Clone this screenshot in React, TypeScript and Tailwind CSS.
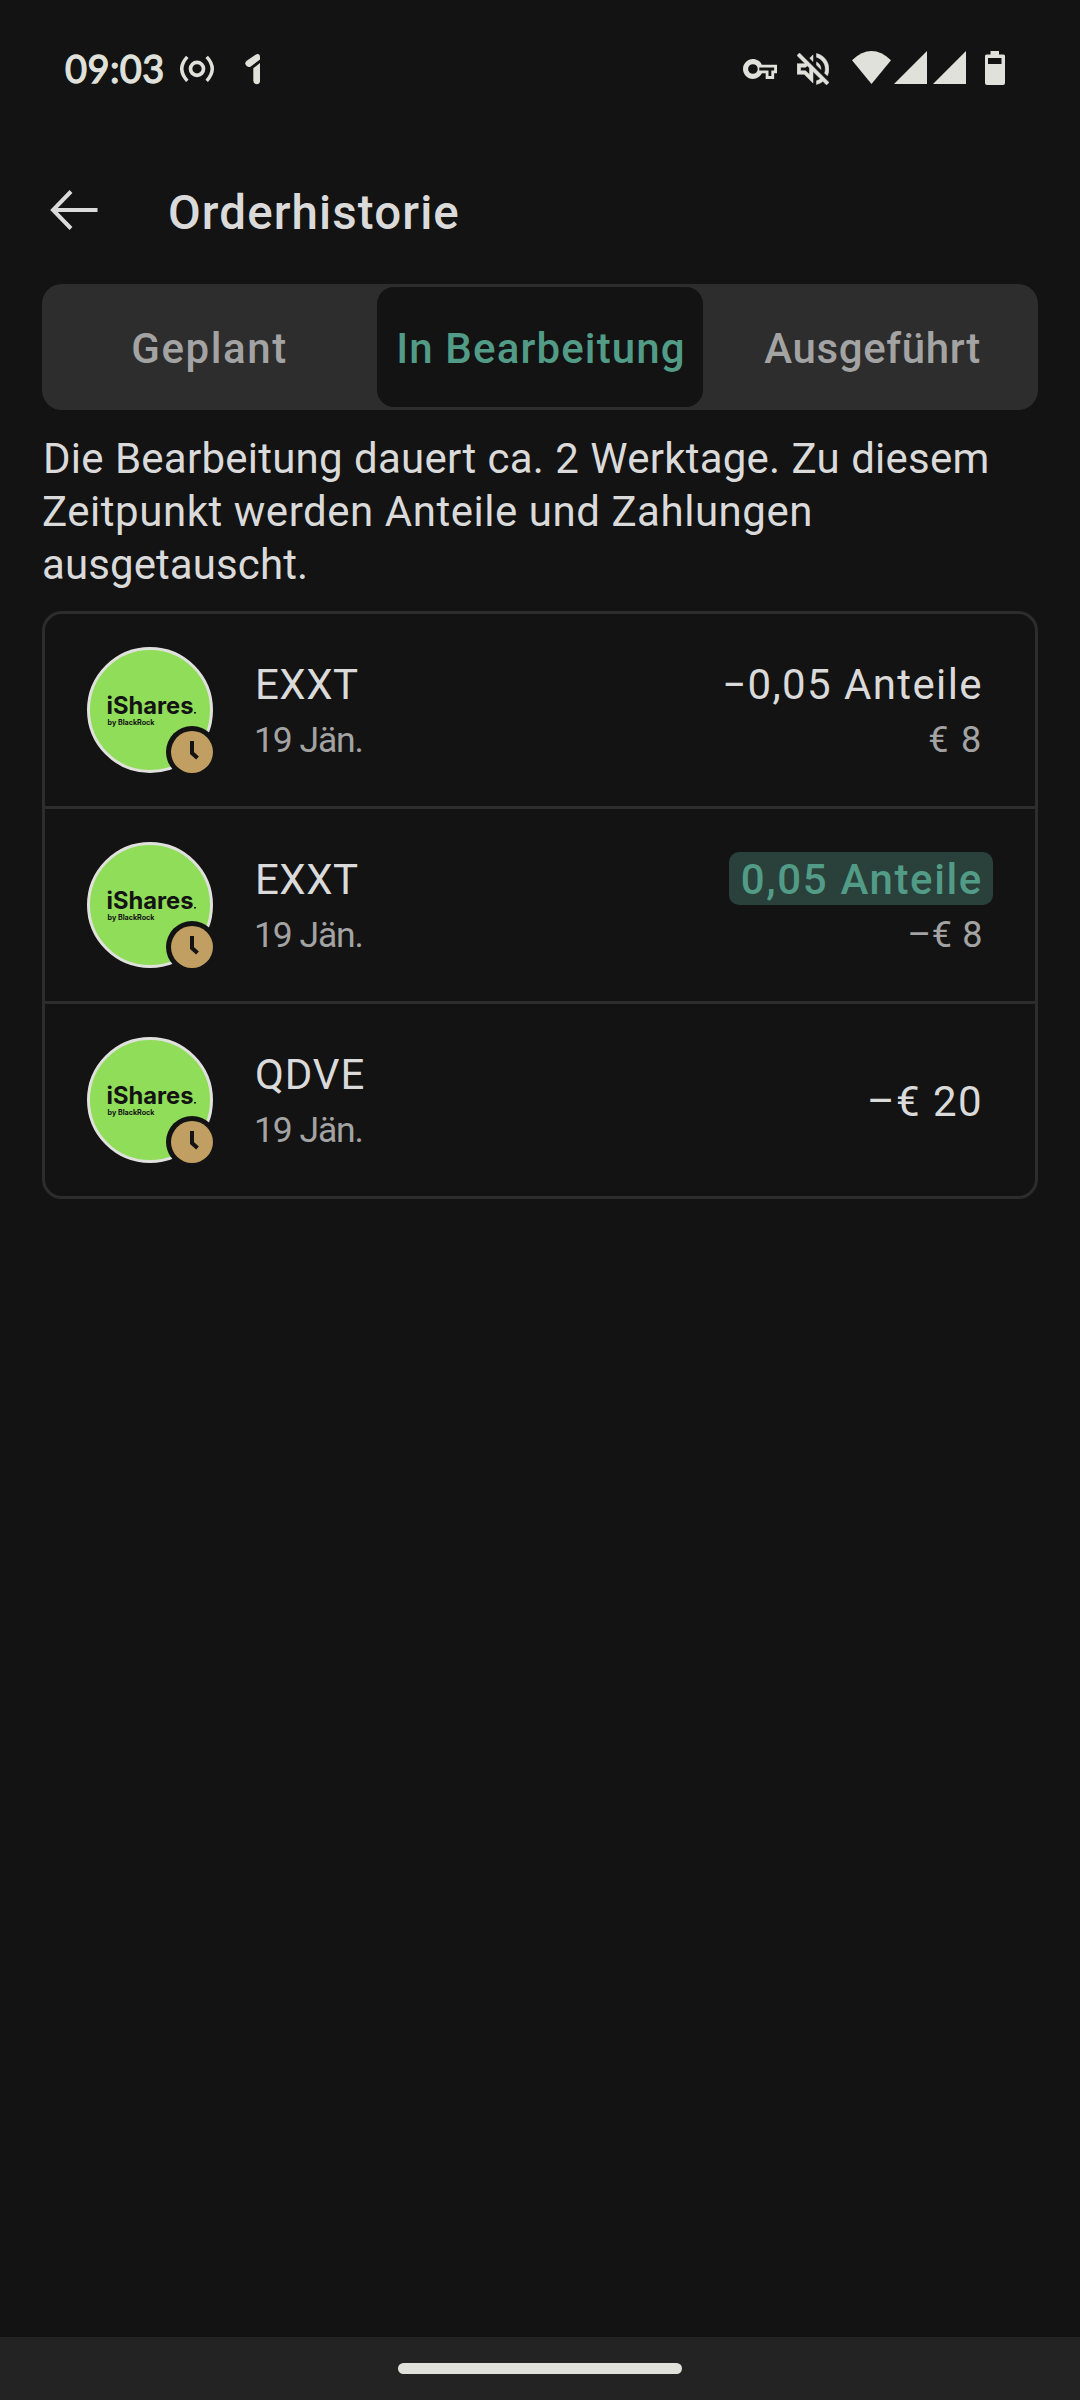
import type { ReactNode } from "react";

type Order = {
  name: string;
  nameClass: string;
  value: string;
  valueClass: string;
  positive?: boolean;
  detail?: string;
  detailClass?: string;
};

const orders: Order[] = [
  {
    name: "EXXT",
    nameClass: "tracking-[0.5px]",
    value: "−0,05 Anteile",
    valueClass: "tracking-[1.4px]",
    detail: "€ 8",
    detailClass: "tracking-[1.8px]",
  },
  {
    name: "EXXT",
    nameClass: "tracking-[0.5px]",
    value: "0,05 Anteile",
    valueClass: "tracking-[1.62px]",
    positive: true,
    detail: "–€ 8",
    detailClass: "tracking-[0.6px]",
  },
  {
    name: "QDVE",
    nameClass: "tracking-[0.9px]",
    value: "–€ 20",
    valueClass: "tracking-[1.45px]",
  },
];

function StatusBar() {
  return (
    <header className="flex h-[136px] items-start text-[#dfe1da]">
      <div className="ml-[65px] mt-[46px] w-[115px] whitespace-nowrap font-['Lato',sans-serif] text-[38px] leading-[44px] tracking-[0.4px] [-webkit-text-stroke:1.3px_#dfe1da]">
        09:03
      </div>
      <svg className="mt-[54px] h-[30px] w-[35px]" viewBox="0 0 35 30" fill="none" stroke="currentColor">
        <circle cx="17" cy="14.8" r="6.5" strokeWidth="3.7" />
        <path d="M7.3 2.8Q-3.8 14.8 7.3 26.8M26.7 2.8Q37.8 14.8 26.7 26.8" strokeWidth="3.4" />
      </svg>
      <svg className="ml-[29px] mt-[53px] h-[32px] w-[18px]" viewBox="0 0 18 32" fill="currentColor">
        <path d="M11.5 1.7Q16 -.3 16 4.5V6.5L6.8 13.4Q4 15 2.2 12.6Q.2 9.8 2.7 7.8Z" />
        <path d="M9.3 15.2L16 10V28Q15.7 31.2 12.6 31.2Q9.5 31 9.3 28Z" />
      </svg>
      <svg className="ml-[481px] mt-[59px] h-[20px] w-[34px]" viewBox="0 5 24 14" fill="currentColor">
        <path
          fillRule="evenodd"
          d="M22 19h-6v-4h-2.68c-1.14 2.42-3.6 4-6.32 4-3.86 0-7-3.14-7-7s3.14-7 7-7c2.72 0 5.17 1.58 6.32 4H24v6h-2v4zm-4-2h2v-4h2v-2H11.5v2H18v4zM7 15.4a3.4 3.4 0 1 0 0-6.8a3.4 3.4 0 0 0 0 6.8z"
        />
      </svg>
      <svg className="ml-[20px] mt-[53px] size-[32px]" viewBox="2.93 2.93 18.14 18.14" fill="currentColor" stroke="currentColor" strokeWidth="0.3">
        <path d="M4.34 2.93L2.93 4.34 7.29 8.7 7 9H3v6h4l5 5v-6.59l4.18 4.18c-.65.49-1.38.88-2.18 1.11v2.06c1.34-.3 2.57-.92 3.61-1.75l2.05 2.05 1.41-1.41L4.34 2.93zM10 15.17L7.83 13H5v-2h2.83l.88-.88L10 11.41v3.76zM19 12c0 .82-.15 1.61-.41 2.34l1.53 1.53c.56-1.17.88-2.48.88-3.87 0-4.28-2.99-7.86-7-8.77v2.06c2.89.86 5 3.54 5 6.71zm-7-8l-1.88 1.88L12 7.76zm4.5 8c0-1.77-1.02-3.29-2.5-4.03v1.79l2.48 2.48c.01-.08.02-.16.02-.24z" />
      </svg>
      <svg className="ml-[23px] mt-[51px] h-[33px] w-[39px]" viewBox="0 0 39 33" fill="currentColor">
        <path d="M0 9.2Q19.5-9 39 9.2L19.5 33Z" />
      </svg>
      <svg className="ml-[3px] mt-[51px] size-[33px]" viewBox="0 0 33 33" fill="currentColor">
        <path d="M33 0V33H0Z" />
      </svg>
      <svg className="ml-[6px] mt-[51px] size-[33px]" viewBox="0 0 33 33" fill="currentColor">
        <path d="M33 0V33H0Z" />
      </svg>
      <svg className="ml-[19px] mt-[51px] h-[34px] w-[20px]" viewBox="0 0 20 34" fill="currentColor">
        <path fillRule="evenodd" d="M5.5 0H14V3.5H18.5Q20 3.5 20 5V32Q20 34 18 34H2Q0 34 0 32V5Q0 3.5 1.5 3.5H5.5ZM3 7V13H16.5V7Z" />
      </svg>
    </header>
  );
}

function Tab({ children }: { children: ReactNode }) {
  return <div className="flex flex-1 items-center justify-center text-[#a3a3a3]">{children}</div>;
}

function FundLogo() {
  return (
    <div className="relative size-[126px] shrink-0">
      <svg className="size-[126px]" viewBox="0 0 126 126">
        <circle cx="63" cy="63" r="61.5" fill="#8fdd58" stroke="#e0e0dc" strokeWidth="3" />
        <text x="19.5" y="66.5" textLength="87" lengthAdjust="spacingAndGlyphs" fontSize="24" className="fill-[#131313] font-['Inter',sans-serif] font-bold">
          iShares
        </text>
        <rect x="107" y="65" width="2" height="1.5" fill="#131313" />
        <text x="20.5" y="77.5" textLength="47" lengthAdjust="spacingAndGlyphs" fontSize="7.2" className="fill-[#131313] font-['Inter',sans-serif] font-bold">
          by BlackRock
        </text>
      </svg>
      <svg className="absolute -bottom-[5px] -right-[5px] size-[52px]" viewBox="0 0 52 52">
        <circle cx="26" cy="26" r="26" fill="#131313" />
        <circle cx="26" cy="26" r="21" fill="#c19f62" />
        <path d="M26 15V27L31.5 32" fill="none" stroke="#131313" strokeWidth="4" />
      </svg>
    </div>
  );
}

function OrderRow({ order }: { order: Order }) {
  return (
    <li className="flex h-[195px] items-center pl-[42px] pr-[52px] last:h-[192px]">
      <FundLogo />
      <div className="ml-[42px] flex-1">
        <div className={`text-[42px] leading-[53px] ${order.nameClass}`}>{order.name}</div>
        <div className="-ml-px mt-[7px] text-[35.5px] leading-[44px] tracking-[-1.1px] text-[#a3a3a3]">19 Jän.</div>
      </div>
      <div className="flex flex-col items-end">
        {order.positive ? (
          <div className={`-mr-[10px] -mt-px mb-px h-[53px] rounded-[10px] bg-[#2a403a] pl-[12px] pr-[10px] text-[42px] font-medium leading-[55px] text-[#529b87] ${order.valueClass}`}>
            {order.value}
          </div>
        ) : (
          <div className={`text-[42px] leading-[53px] ${order.detail ? "" : "pt-[3px]"} ${order.valueClass}`}>{order.value}</div>
        )}
        {order.detail && (
          <div className={`mt-[7px] text-[36px] leading-[44px] text-[#a3a3a3] ${order.detailClass}`}>{order.detail}</div>
        )}
      </div>
    </li>
  );
}

export default function App() {
  return (
    <div className="flex h-[2400px] w-[1080px] flex-col overflow-hidden bg-[#131313] font-['Roboto',sans-serif] text-[#dadada]">
      <StatusBar />
      <div className="flex h-[148px] items-center pl-[50px]">
        <svg className="h-[40px] w-[48px]" viewBox="0 0 48 40" fill="none" stroke="currentColor" strokeWidth="4">
          <path d="M47.5 20H3M21 1.5L3 20L21 38.5" />
        </svg>
        <h1 className="ml-[70px] pt-[5px] text-[47.5px] font-medium leading-[60px] tracking-[1.1px]">Orderhistorie</h1>
      </div>

      <nav className="mx-[42px] flex h-[126px] shrink-0 rounded-[20px] bg-[#2d2d2d] py-[3px] text-[42px] font-medium">
        <Tab>
          <span className="pt-[2px] tracking-[1.6px]">Geplant</span>
        </Tab>
        <div className="flex w-[326px] items-center justify-center rounded-[17px] bg-[#131313] text-[#529b87]">
          <span className="whitespace-nowrap pl-[2px] pt-[2px] tracking-[1.15px]">In Bearbeitung</span>
        </div>
        <Tab>
          <span className="pl-[4px] pt-[2px] tracking-[0.63px]">Ausgeführt</span>
        </Tab>
      </nav>

      <p className="ml-[42px] mt-[22px] whitespace-nowrap text-[42px] leading-[53px]">
        <span className="block pl-px tracking-[0.24px] [word-spacing:0.5px]">Die Bearbeitung dauert ca. 2 Werktage. Zu diesem</span>
        <span className="block tracking-[0.54px]">Zeitpunkt werden Anteile und Zahlungen</span>
        <span className="block tracking-[0.1px]">ausgetauscht.</span>
      </p>

      <ul className="mx-[42px] mt-[20px] divide-y-[3px] divide-[#2d2d2d] rounded-[20px] border-[3px] border-[#2d2d2d]">
        {orders.map((order, index) => (
          <OrderRow key={index} order={order} />
        ))}
      </ul>

      <footer className="mt-auto flex h-[63px] justify-center bg-[#232323] pt-[26px]">
        <div className="h-[11px] w-[284px] rounded-full bg-[#dfe1da]" />
      </footer>
    </div>
  );
}
